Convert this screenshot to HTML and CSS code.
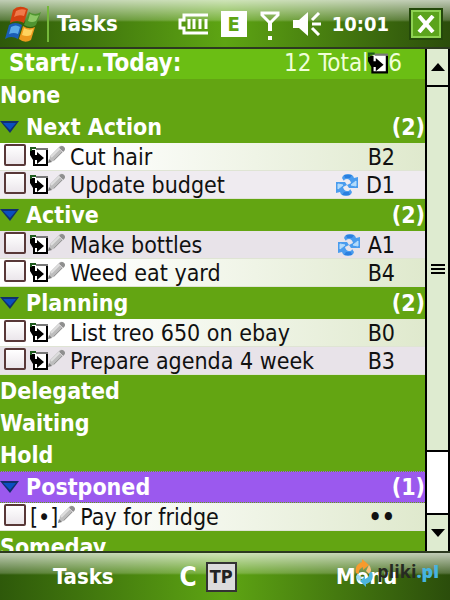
FILE: index.html
```
<!DOCTYPE html>
<html lang="en">
<head>
  <meta charset="UTF-8" />
  <meta name="viewport" content="width=device-width, initial-scale=1.0"/>
  <title>Tasks</title>
  <link rel="stylesheet" href="styles.css">
</head>
<body>

  <!-- Shared icons -->
  <svg class="defs" aria-hidden="true">
    <symbol id="icon-start" viewBox="0 0 18 19">
      <path d="M4 2h14v16H4z" fill="#fff"/>
      <path d="M6 2h12" stroke="#777" stroke-width="2"/>
      <path d="M17 3v15H4v-5" fill="none" stroke="#000" stroke-width="2"/>
      <path d="M5 3H0v5l3 5h4v4l7-6-7-6v3H5z" fill="#000"/>
      <path d="M1 4V1h5" fill="none" stroke="#1d5a1d" stroke-width="2"/>
    </symbol>
    <symbol id="icon-pencil" viewBox="0 0 17 18">
      <path d="M1 17l1-6L12 1q2-1 4 1t0 4L6 16z" fill="#bdbdbd"/>
      <path d="M3 12L12 3" stroke="#dedede" stroke-width="2"/>
      <path d="M6 15L15 6" stroke="#999" stroke-width="1"/>
      <path d="M11 3l4 4 1-1q2-2 0-4t-4 0z" fill="#8f8f8f"/>
      <path d="M11 3l4 4" stroke="#d5d1d5" stroke-width="1"/>
      <path d="M0 18l1-4 3 3z" fill="#777"/>
    </symbol>
    <symbol id="icon-repeat" viewBox="0 0 24 24">
      <path d="M7 5Q8 1 13 1q5 0 6 4l4-1v11h-9l-2-3 4-2q-1-4-4-4-3 0-3 2z" fill="#4a9cee"/>
      <path d="M17 19q-1 4-6 4-5 0-6-4l-4 1V9h9l2 3-4 2q1 4 4 4 3 0 3-2z" fill="#4a9cee"/>
      <path d="M16 12l5-4v5zM8 12l-5 4v-5z" fill="#b5dcfb" stroke="#b5dcfb"/>
      <path d="M9 2h8l-2 3h-5zM15 22H7l2-3h5z" fill="#2a7fe0"/>
    </symbol>
    <symbol id="icon-arrow" viewBox="0 0 19 12">
      <path d="M0 0h19l-9 12z" fill="#10306c"/>
      <path d="M3 2h13l-6 7z" fill="#0a4fc0"/>
    </symbol>
  </svg>

  <header class="titlebar">
    <button class="start" aria-label="Start">
      <svg width="38" height="36" viewBox="0 0 38 36">
        <path d="M9 4q6-6 15-1l-4 14q-7-4-14 0z" fill="#d3400f"/>
        <path d="M12 5q5-3 10-1l-2 6q-5-2-10 1z" fill="#f07a4a"/>
        <path d="M25 6q6 4 12 0l-5 13q-5 4-12 0z" fill="#4f9430"/>
        <path d="M26 8q5 3 9 1l-3 6q-4 2-8 0z" fill="#8dc765"/>
        <path d="M5 19q6-4 13 0l-4 14q-7-4-13 0z" fill="#1a5db4"/>
        <path d="M7 21q5-3 9 0l-2 7q-4-2-9 0z" fill="#5cabe8"/>
        <path d="M19 20q6 4 12 1l-4 13q-6 4-12-1z" fill="#ec9a1e"/>
        <path d="M20 22q5 3 9 1l-2 6q-4 2-9 0z" fill="#ffd45e"/>
      </svg>
    </button>
    <h1>Tasks</h1>
    <div class="status">
      <svg width="30" height="22" viewBox="0 0 30 22" role="img" aria-label="Battery">
        <path d="M30 2H6v5H2v8h4v5h24" fill="none" stroke="#fff" stroke-width="3"/>
        <path d="M11 6v10M16 6v10M22 6v10M28 6v10" stroke="#fff" stroke-width="3"/>
      </svg>
      <span class="edge">E</span>
      <svg width="20" height="30" viewBox="0 0 20 30" role="img" aria-label="Signal">
        <path d="M2 2h16v2l-7 7H9L2 4z" fill="none" stroke="#fff" stroke-width="3"/>
        <path d="M10 10v10" stroke="#fff" stroke-width="4"/>
        <path d="M8 25h4v4H8z" fill="#fff"/>
      </svg>
      <svg width="30" height="24" viewBox="0 0 30 24" role="img" aria-label="Volume">
        <path d="M0 8h6l9-8v24l-9-8H0z" fill="#fff"/>
        <path d="M19 12h9M19 8l7-7M19 16l7 7" stroke="#fff" stroke-width="3"/>
      </svg>
      <time>10:01</time>
    </div>
    <button class="close" aria-label="Close">
      <svg width="18" height="18" viewBox="0 0 18 18">
        <path d="M2 1l14 16M16 1L2 17" stroke="#fff" stroke-width="4"/>
      </svg>
    </button>
  </header>

  <main class="screen">
    <section class="content">
      <div class="summary">
        <strong>Start/...Today:</strong>
        <span class="total">12 Total <svg class="total-icon"><use href="#icon-start"/></svg>6</span>
      </div>

      <div class="groups">
        <h2 class="group">None</h2>

        <h2 class="group"><svg class="arrow"><use href="#icon-arrow"/></svg>Next Action <span class="count">(2)</span></h2>
        <ul>
          <li class="task">
            <input type="checkbox" id="task1">
            <svg class="flag"><use href="#icon-start"/></svg>
            <svg class="pencil"><use href="#icon-pencil"/></svg>
            <label for="task1">Cut hair</label>
            <span class="priority">B2</span>
          </li>
          <li class="task alt">
            <input type="checkbox" id="task2">
            <svg class="flag"><use href="#icon-start"/></svg>
            <svg class="pencil"><use href="#icon-pencil"/></svg>
            <label for="task2">Update budget</label>
            <svg class="repeat"><use href="#icon-repeat"/></svg>
            <span class="priority">D1</span>
          </li>
        </ul>

        <h2 class="group"><svg class="arrow"><use href="#icon-arrow"/></svg>Active <span class="count">(2)</span></h2>
        <ul>
          <li class="task overdue">
            <input type="checkbox" id="task3">
            <svg class="flag"><use href="#icon-start"/></svg>
            <svg class="pencil"><use href="#icon-pencil"/></svg>
            <label for="task3">Make bottles</label>
            <svg class="repeat"><use href="#icon-repeat"/></svg>
            <span class="priority">A1</span>
          </li>
          <li class="task">
            <input type="checkbox" id="task4">
            <svg class="flag"><use href="#icon-start"/></svg>
            <svg class="pencil"><use href="#icon-pencil"/></svg>
            <label for="task4">Weed eat yard</label>
            <span class="priority">B4</span>
          </li>
        </ul>

        <h2 class="group"><svg class="arrow"><use href="#icon-arrow"/></svg>Planning <span class="count">(2)</span></h2>
        <ul>
          <li class="task">
            <input type="checkbox" id="task5">
            <svg class="flag"><use href="#icon-start"/></svg>
            <svg class="pencil"><use href="#icon-pencil"/></svg>
            <label for="task5">List treo 650 on ebay</label>
            <span class="priority">B0</span>
          </li>
          <li class="task overdue">
            <input type="checkbox" id="task6">
            <svg class="flag"><use href="#icon-start"/></svg>
            <svg class="pencil"><use href="#icon-pencil"/></svg>
            <label for="task6">Prepare agenda 4 week</label>
            <span class="priority">B3</span>
          </li>
        </ul>

        <h2 class="group">Delegated</h2>
        <h2 class="group">Waiting</h2>
        <h2 class="group">Hold</h2>

        <h2 class="group selected"><svg class="arrow"><use href="#icon-arrow"/></svg>Postponed <span class="count">(1)</span></h2>
        <ul>
          <li class="task">
            <input type="checkbox" id="task7">
            <span class="marker">[•]</span>
            <svg class="pencil"><use href="#icon-pencil"/></svg>
            <label for="task7">Pay for fridge</label>
            <span class="priority dots">••</span>
          </li>
        </ul>

        <h2 class="group">Someday</h2>
      </div>
    </section>

    <div class="scrollbar">
      <button class="step" aria-label="Scroll up">
        <svg width="14" height="8" viewBox="0 0 14 8"><path d="M0 8l7-8 7 8z"/></svg>
      </button>
      <div class="track">
        <svg width="14" height="10" viewBox="0 0 14 10"><path d="M0 1h14M0 5h14M0 9h14" stroke="#000" stroke-width="2"/></svg>
      </div>
      <div class="rest"></div>
      <button class="step" aria-label="Scroll down">
        <svg width="14" height="8" viewBox="0 0 14 8"><path d="M0 0l7 8 7-8z"/></svg>
      </button>
    </div>
  </main>

  <footer class="menubar">
    <button class="softkey">Tasks</button>
    <div class="tray">
      <span class="tray-c">C</span>
      <span class="tray-tp">TP</span>
    </div>
    <button class="softkey">Menu</button>
    <a class="brand" href="#">
      <svg width="18" height="28" viewBox="0 0 18 28">
        <path d="M1 14Q-1 6 7 3V0l7 6-6 5V8Q3 10 4 15z" fill="#f79a2d"/>
        <path d="M14 6q4 5 0 9l-3-3z" fill="#f9c27d"/>
        <path d="M17 13q3 9-6 12v3l-6-6 5-5v3q5-2 4-6z" fill="#4db5dc"/>
        <path d="M3 15l4 4-3 3q-5-4-1-7z" fill="#9ddcf0"/>
      </svg>
      <span>pliki<b>.pl</b></span>
    </a>
  </footer>

</body>
</html>
```
FILE: styles.css
```
* {
  box-sizing: border-box;
}
body {
  font-family: "DejaVu Sans Condensed", "DejaVu Sans", sans-serif;
  font-size: 23px; line-height: 28px; color: #111;
  margin: 0; height: 100vh; overflow: hidden;
  display: flex; flex-direction: column;
}
h1, h2, ul {
  margin: 0; padding: 0; font-size: 23px; list-style: none;
}
button {
  font: inherit; color: inherit; padding: 0; border: 0; background: none;
}
svg {
  display: block; flex: none;
}
.defs {
  position: absolute; width: 0; height: 0;
}

/* Title bar and menu bar */
.titlebar, .menubar {
  height: 49px; flex: none; color: white; font-weight: bold;
  display: flex; align-items: center;
  background:
    linear-gradient(rgba(255, 255, 255, 0.7), rgba(255, 255, 255, 0.2) 20px, transparent 22px),
    linear-gradient(90deg, #2e590a, #5ea513 50%, #2b4d0b);
}
.titlebar {
  border-bottom: 2px solid #2c3a20; padding-right: 7px;
}
.start {
  padding: 0 5px 0 4px; height: 36px;
}
.titlebar h1 {
  border-left: 2px solid #75b83a; padding: 4px 0 4px 8px; flex: 1;
  font-size: 22px;
}
.status {
  display: flex; align-items: center; gap: 13px; margin-right: 20px;
}
.edge {
  width: 26px; height: 26px; line-height: 26px; text-align: center;
  font-size: 20px; background: white; color: #5ea513;
}
.status svg:nth-of-type(2) {
  margin-top: 4px;
}
.status time {
  font-size: 20px; margin-left: -4px;
}
.close {
  width: 34px; height: 32px; border: 2px solid #23480a; background: #5ba31c;
  box-shadow: inset 0 0 0 2px #8ed152;
  display: grid; place-items: center;
}

/* Task list */
.screen {
  flex: 1; min-height: 0; display: flex;
}
.content {
  flex: 1; min-width: 0; display: flex; flex-direction: column;
  background: #63a512;
}
.summary {
  height: 30px; flex: none; padding: 0 23px 0 9px; font-size: 24px;
  display: flex; justify-content: space-between;
  color: white; background: #6bbe14;
}
.total {
  display: flex; color: #f0ffd8;
}
.total-icon {
  width: 20px; height: 22px; margin-top: 3px;
}
.groups {
  flex: 1; min-height: 0; overflow: hidden;
}
.group {
  height: 32px; line-height: 32px; color: white;
  display: flex; align-items: center;
}
.arrow {
  width: 19px; height: 12px; margin-right: 7px;
}
.count {
  margin-left: auto;
}
.selected {
  background: #9b59ee; border: dotted #63a512; border-width: 1px 0;
}
.task {
  height: 28px; padding: 0 30px 0 4px;
  display: flex; align-items: center;
  background: linear-gradient(90deg, #ffffff 20%, #dfe9cd);
  border-bottom: 1px solid #dfe4d4;
}
.task.alt {
  background: #efebf0;
}
.task.overdue {
  background: #e8e3e9;
}
.task input {
  appearance: none; width: 22px; height: 22px; margin: 0 4px 3px 0;
  border: 2px solid #583838; border-radius: 2px;
  background: linear-gradient(#ffffff, #ebe6eb);
}
.flag {
  width: 18px; height: 19px;
}
.pencil {
  width: 17px; height: 18px; margin-bottom: 5px;
}
.task label {
  flex: 1; margin-left: 5px; white-space: nowrap;
}
.repeat {
  width: 24px; height: 24px; margin-right: 7px;
}
.dots {
  font-weight: bold;
}

/* Scroll bar */
.scrollbar {
  width: 25px; flex: none; display: flex; flex-direction: column;
  border: solid black; border-width: 0 2px; background: #deebd0;
}
.step {
  height: 36px; display: grid; place-items: center;
}
.track {
  flex: 6; display: grid; place-items: center;
  border: solid black; border-width: 2px 0;
}
.rest {
  flex: 1; background: white; border-bottom: 2px solid black;
}

/* Menu bar */
.menubar {
  position: relative; border-top: 2px solid #2c3a20;
}
.softkey {
  flex: none; width: 37%; font-size: 22px; font-weight: bold;
}
.tray {
  flex: 1; padding-left: 13px;
  display: flex; align-items: center; gap: 9px;
}
.tray-c {
  font-size: 26px;
}
.tray-tp {
  border: 2px solid #333; background: #dcdcdc; color: #222;
  font-size: 18px; line-height: 26px; padding: 0 2px;
}
.brand {
  position: absolute; right: 11px; top: 6px;
  display: flex; align-items: center; gap: 4px;
  font: bold 18px/24px "Open Sans", sans-serif;
  color: #262a22; text-decoration: none;
}
.brand span {
  padding-bottom: 4px;
}
.brand b {
  color: #46b4e0;
}
```
